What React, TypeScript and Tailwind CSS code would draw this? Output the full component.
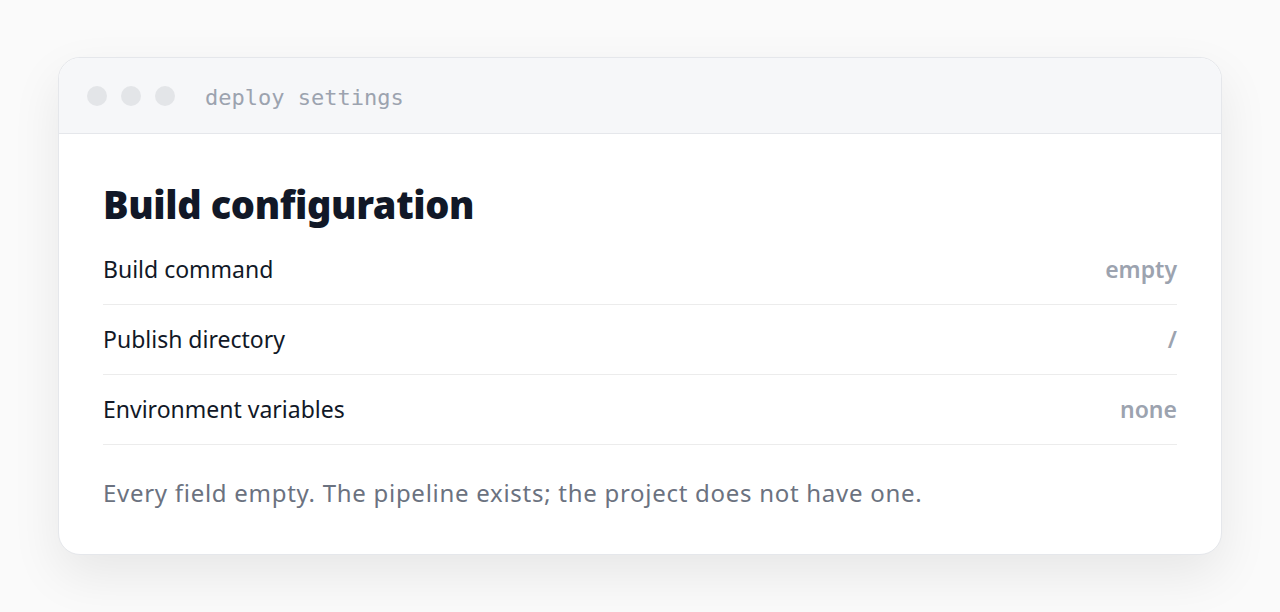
const rows = [
  { label: 'Build command', value: 'empty' },
  { label: 'Publish directory', value: '/' },
  { label: 'Environment variables', value: 'none' },
];

export default function App() {
  return (
    <div className="min-h-[612px] bg-[#fafafa] px-[58px] pt-[57px] font-['Noto_Sans',sans-serif]">
      <div className="overflow-hidden rounded-[22px] border border-[#e5e7eb] bg-white shadow-[0_20px_50px_rgba(0,0,0,0.08)]">
        {/* window chrome */}
        <div className="flex h-[76px] items-center gap-[14px] border-b border-[#e5e7eb] bg-[#f6f7f9] px-[28px]">
          <span className="h-[20px] w-[20px] rounded-full bg-[#e3e5e8]" />
          <span className="h-[20px] w-[20px] rounded-full bg-[#e3e5e8]" />
          <span className="h-[20px] w-[20px] rounded-full bg-[#e3e5e8]" />
          <span className="ml-[16px] pt-[3px] font-['DejaVu_Sans_Mono',monospace] text-[22px] text-[#9ca3af]">deploy settings</span>
        </div>

        <div className="px-[44px] pb-[43px] pt-[48px]">
          <h1 className="text-[38px] font-black leading-[44px] tracking-[-0.01em] text-[#111827]">Build configuration</h1>
          <div className="mt-[9px]">
            {rows.map((r) => (
              <div key={r.label} className="flex h-[70px] items-center justify-between border-b border-[#ececec]">
                <span className="text-[23px] text-[#111827]">{r.label}</span>
                <span className="text-[23px] font-semibold text-[#9ca3af]">{r.value}</span>
              </div>
            ))}
          </div>
          <p className="mt-[30px] text-[24px] tracking-[0.03em] text-[#6b7280]">Every field empty. The pipeline exists; the project does not have one.</p>
        </div>
      </div>
    </div>
  );
}
